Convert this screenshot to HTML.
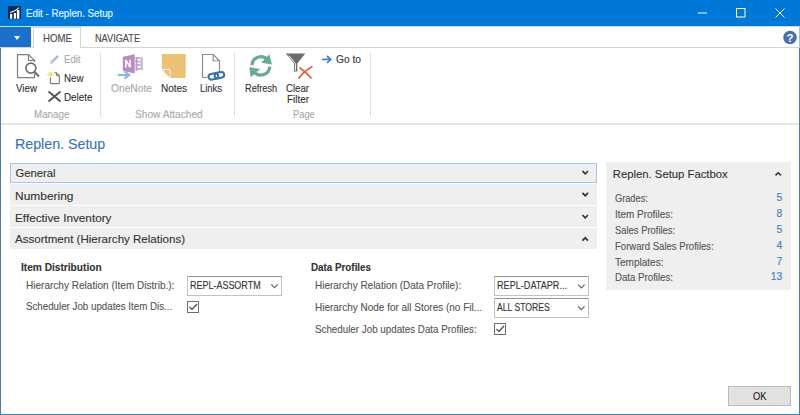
<!DOCTYPE html>
<html><head><meta charset="utf-8">
<style>
*{margin:0;padding:0;box-sizing:border-box}
html,body{width:800px;height:415px;overflow:hidden;background:#fff;font-family:"Liberation Sans",sans-serif;color:#333}
.a{position:absolute;white-space:nowrap;line-height:20px;transform-origin:0 0;-webkit-text-stroke:0.12px currentColor}
.b{position:absolute}
</style></head><body>
<!-- title bar -->
<div class="b" style="left:0;top:0;width:800px;height:26px;background:#0078d7"></div>
<div class="b" style="left:0;top:26px;width:800px;height:1px;background:#b9def3"></div>
<!-- window borders -->
<div class="b" style="left:0;top:27px;width:1px;height:388px;background:#507e9c"></div>
<div class="b" style="left:799px;top:27px;width:1px;height:388px;background:#4280ba"></div>
<div class="b" style="left:799px;top:27px;width:1px;height:20px;background:#9cc0e0"></div>
<div class="b" style="left:0;top:414px;width:800px;height:1px;background:#4280ba"></div>
<!-- tab row -->
<div class="b" style="left:0;top:27px;width:31px;height:20px;background:#1b70cb"></div>
<div class="b" style="left:0;top:47px;width:800px;height:1px;background:#d4d4d4"></div>
<div class="b" style="left:33px;top:27px;width:48px;height:21px;background:#fff;border:1px solid #d4d4d4;border-bottom:none"></div>
<!-- ribbon bottom -->
<div class="b" style="left:1px;top:123px;width:798px;height:2px;background:#e6e6e6"></div>
<!-- separators -->
<div class="b" style="left:100px;top:53px;width:1px;height:64px;background:#e0e0e0"></div>
<div class="b" style="left:234px;top:53px;width:1px;height:64px;background:#e0e0e0"></div>
<div class="b" style="left:370px;top:53px;width:1px;height:64px;background:#e0e0e0"></div>
<!-- fasttab headers -->
<div class="b" style="left:10px;top:163px;width:587px;height:20px;background:#efefef;border:1px solid #a9c5e6"></div>
<div class="b" style="left:10px;top:184px;width:587px;height:21px;background:#efefef"></div>
<div class="b" style="left:10px;top:206px;width:587px;height:21px;background:#efefef"></div>
<div class="b" style="left:10px;top:228px;width:587px;height:21px;background:#efefef"></div>
<!-- factbox -->
<div class="b" style="left:606px;top:162px;width:185px;height:128px;background:#efefef"></div>
<!-- dropdowns -->
<div class="b" style="left:187px;top:276px;width:95px;height:20px;border:1px solid #c2c2c2;border-top-color:#8f9595;background:#fff"></div>
<div class="b" style="left:494px;top:276px;width:95px;height:20px;border:1px solid #c2c2c2;border-top-color:#8f9595;background:#fff"></div>
<div class="b" style="left:494px;top:298px;width:95px;height:20px;border:1px solid #c2c2c2;border-top-color:#8f9595;background:#fff"></div>
<!-- checkboxes -->
<div class="b" style="left:187px;top:301px;width:12px;height:12px;border:1px solid #6d6d6d;background:#fff"></div>
<div class="b" style="left:494px;top:323px;width:12px;height:12px;border:1px solid #6d6d6d;background:#fff"></div>
<!-- OK button -->
<div class="b" style="left:728px;top:386px;width:63px;height:20px;background:#e1e1e1;border:1px solid #bababa"></div>

<svg class="b" style="left:0;top:0" width="800" height="415" viewBox="0 0 800 415">
  <!-- app icon -->
  <rect x="8" y="6" width="13" height="13" fill="#0b2a5b"/>
  <rect x="10" y="14" width="2.2" height="4.7" fill="#fff"/>
  <rect x="13.8" y="13" width="2.2" height="5.7" fill="#fff"/>
  <rect x="16.9" y="10" width="2.5" height="8.7" fill="#fff"/>
  <path d="M10.2 12.6 Q15 11.5 19.2 7.6" stroke="#e8eef8" stroke-width="1.1" fill="none"/>
  <!-- window controls -->
  <rect x="698" y="12.5" width="9" height="1" fill="#fff"/>
  <rect x="736.5" y="8.5" width="8.5" height="8.5" stroke="#fff" stroke-width="1" fill="none"/>
  <path d="M775.5 8.5 L784.5 17.5 M784.5 8.5 L775.5 17.5" stroke="#fff" stroke-width="1"/>
  <!-- dropdown triangle -->
  <path d="M14 36 H20 L17 40 Z" fill="#fff"/>
  <!-- help -->
  <circle cx="790" cy="37.5" r="6.8" fill="#4a70a6"/>
  <text x="790" y="42" font-family="Liberation Sans" font-weight="700" font-size="11.5" fill="#fff" text-anchor="middle">?</text>
  <!-- View icon -->
  <path d="M34.5 62 V60.5 L28.5 54.5 H17.5 V77.5 H34.5 V73.5" stroke="#808080" stroke-width="1.25" fill="none"/>
  <path d="M28.5 54.5 V60.5 H34.5" stroke="#777" stroke-width="1.2" fill="none"/>
  <circle cx="30.9" cy="68.1" r="5" stroke="#707070" stroke-width="1.7" fill="#fff"/>
  <path d="M34.6 72 L39 76.5" stroke="#707070" stroke-width="2.2"/>
  <!-- Edit pencil -->
  <path d="M52.3 61.7 L58.2 55.8" stroke="#aabfd2" stroke-width="2.6"/><path d="M50 64 L50.9 60.6 L53.4 63.1 Z" fill="#aabfd2"/>
  <!-- New icon -->
  <path d="M54.3 72.8 H56.4 L59.4 75.8 V82.6 Q59.4 83.6 58.4 83.6 H51.3 Q50.3 83.6 50.3 82.6 V77.5" stroke="#7a7a7a" stroke-width="1.1" fill="none"/>
  <path d="M56.4 72.8 V75.8 H59.4" stroke="#7a7a7a" stroke-width="1" fill="none"/>
  <path d="M50.5 71.2 V77.8 M47.2 74.5 H53.8 M48.2 72.2 L52.8 76.8 M52.8 72.2 L48.2 76.8" stroke="#ecd27a" stroke-width="0.9"/>
  <circle cx="50.5" cy="74.5" r="1.3" fill="#f2dc8a"/>
  <!-- Delete X -->
  <path d="M48.5 91.5 L60.5 101.5 M60.5 91.5 L48.5 101.5" stroke="#555" stroke-width="1.9"/>
  <!-- OneNote -->
  <path d="M122.8 56.7 L134.7 54.2 V73.6 L122.8 70.8 Z" fill="#b68cc3"/>
  <path d="M125 67.6 V59.8 H126.6 L129.4 64.6 V59.8 H130.9 V67.6 H129.4 L126.6 62.8 V67.6 Z" fill="#fff"/>
  <rect x="135.6" y="57.2" width="1.8" height="13.6" fill="#bb98c8"/>
  <path d="M135.6 57.9 H140.6 M135.6 61.5 H140.6 M135.6 65.1 H140.6 M135.6 68.7 H140.6" stroke="#bb98c8" stroke-width="1.5"/>
  <rect x="140.6" y="57.3" width="2.2" height="12.8" fill="#c9b3d2"/>
  <path d="M117.7 75 H128" stroke="#8dbad9" stroke-width="2.2"/>
  <path d="M124.6 71.4 L129.2 75 L124.6 78.6" stroke="#8dbad9" stroke-width="2.2" fill="none"/>
  <!-- Notes -->
  <path d="M162 54 H185.7 V78 H170.5 L162 69.5 Z" fill="#eec274"/>
  <path d="M162.5 69.5 H170 V77.5" stroke="#fff" stroke-width="1" fill="none"/>
  <path d="M163 70.5 H169.5 V77.5 Z" fill="#eec274"/>
  <!-- Links -->
  <path d="M219.5 72 V60.8 L213.2 54.5 H202.5 V77.5 H207.5" stroke="#8a8a8a" stroke-width="1.15" fill="none"/>
  <path d="M213.2 54.5 V60.8 H219.5" stroke="#8a8a8a" stroke-width="1.1" fill="none"/>
  <rect x="208.6" y="73.6" width="9.6" height="5.6" rx="2.8" stroke="#3a76ab" stroke-width="2.1" fill="none" transform="rotate(-12 213.4 76.4)"/>
  <rect x="214.6" y="72.4" width="9.6" height="5.6" rx="2.8" stroke="#3a76ab" stroke-width="2.1" fill="none" transform="rotate(-12 219.4 75.2)"/>
  <!-- Refresh -->
  <path d="M251.9 65.2 A8.9 8.9 0 0 1 267.6 59.9" stroke="#6aab98" stroke-width="3.2" fill="none"/>
  <path d="M269.3 54.3 L272 64.4 L261.2 62.8 Z" fill="#6aab98"/>
  <path d="M269.7 66.6 A8.9 8.9 0 0 1 254 71.9" stroke="#6aab98" stroke-width="3.2" fill="none"/>
  <path d="M250.6 77.2 L249.4 67.2 L260.3 69 Z" fill="#6aab98"/>
  <!-- Clear filter -->
  <path d="M285.9 53.6 H305.3 L297.3 63.5 V71.6 H294 V63.5 Z" fill="#6b6b6b"/>
  <path d="M288.8 55.6 L295.4 63.6 V70.6" stroke="#fff" stroke-width="1" fill="none"/>
  <path d="M298.5 78.5 Q304 71 312.5 66.5 M299.5 67.5 Q306 72 311.5 78.5" stroke="#d9674a" stroke-width="1.9" fill="none"/>
  <!-- Go to arrow -->
  <path d="M322 59.4 H330" stroke="#3f7fbf" stroke-width="1.7"/>
  <path d="M327 56 L330.8 59.4 L327 62.8" stroke="#3f7fbf" stroke-width="1.7" fill="none"/>
  <!-- fasttab chevrons -->
  <path d="M582.4 171 L585.2 173.8 L588 171" stroke="#333" stroke-width="1.7" fill="none"/>
  <path d="M582.4 192.9 L585.2 195.7 L588 192.9" stroke="#333" stroke-width="1.7" fill="none"/>
  <path d="M582.4 215 L585.2 217.8 L588 215" stroke="#333" stroke-width="1.7" fill="none"/>
  <path d="M582.4 240.6 L585.2 237.8 L588 240.6" stroke="#333" stroke-width="1.7" fill="none"/>
  <!-- factbox caret -->
  <path d="M775.5 175.4 L778.2 172.7 L780.9 175.4" stroke="#333" stroke-width="1.5" fill="none"/>
  <!-- dropdown chevrons -->
  <path d="M271.2 284.3 L274.5 287.6 L277.8 284.3" stroke="#606060" stroke-width="1.1" fill="none"/>
  <path d="M578 284.6 L581.3 287.9 L584.6 284.6" stroke="#606060" stroke-width="1.1" fill="none"/>
  <path d="M578 306.4 L581.3 309.7 L584.6 306.4" stroke="#606060" stroke-width="1.1" fill="none"/>
  <!-- checkmarks -->
  <path d="M189.5 307 L192 309.5 L197 304" stroke="#444" stroke-width="1.2" fill="none"/>
  <path d="M496.5 329 L499 331.5 L504 326" stroke="#444" stroke-width="1.2" fill="none"/>
</svg>
<div class="a" style="left:26.30px;top:3.67px;font-size:10.2px;color:#def3ff;transform:scaleX(0.9542);-webkit-text-stroke:0.22px currentColor;">Edit - Replen. Setup</div>
<div class="a" style="left:42.70px;top:29.23px;font-size:10.3px;color:#4a4a4a;transform:scaleX(0.9388);">HOME</div>
<div class="a" style="left:95.00px;top:29.23px;font-size:10.3px;color:#4a4a4a;transform:scaleX(0.8904);">NAVIGATE</div>
<div class="a" style="left:16.00px;top:78.16px;font-size:10.5px;color:#333;transform:scaleX(0.9305);">View</div>
<div class="a" style="left:63.60px;top:49.26px;font-size:10.5px;color:#a9a9a9;transform:scaleX(0.9120);">Edit</div>
<div class="a" style="left:63.60px;top:67.96px;font-size:10.5px;color:#333;transform:scaleX(0.9283);">New</div>
<div class="a" style="left:63.60px;top:86.86px;font-size:10.5px;color:#333;transform:scaleX(0.9390);">Delete</div>
<div class="a" style="left:34.30px;top:104.16px;font-size:10.5px;color:#a9a9a9;transform:scaleX(0.9329);">Manage</div>
<div class="a" style="left:111.00px;top:78.16px;font-size:10.5px;color:#a9a9a9;transform:scaleX(0.9756);">OneNote</div>
<div class="a" style="left:160.70px;top:78.16px;font-size:10.5px;color:#333;transform:scaleX(0.9479);">Notes</div>
<div class="a" style="left:200.00px;top:78.16px;font-size:10.5px;color:#333;transform:scaleX(0.8975);">Links</div>
<div class="a" style="left:134.70px;top:104.16px;font-size:10.5px;color:#a9a9a9;transform:scaleX(0.9670);">Show Attached</div>
<div class="a" style="left:245.00px;top:78.16px;font-size:10.5px;color:#333;transform:scaleX(0.8758);">Refresh</div>
<div class="a" style="left:285.90px;top:78.16px;font-size:10.5px;color:#333;transform:scaleX(0.9167);">Clear</div>
<div class="a" style="left:287.00px;top:89.16px;font-size:10.5px;color:#333;transform:scaleX(0.9429);">Filter</div>
<div class="a" style="left:335.80px;top:49.36px;font-size:10.5px;color:#333;transform:scaleX(0.9735);">Go to</div>
<div class="a" style="left:292.60px;top:104.16px;font-size:10.5px;color:#a9a9a9;transform:scaleX(0.8890);">Page</div>
<div class="a" style="left:14.90px;top:133.60px;font-size:15.3px;color:#3973b0;transform:scaleX(0.9304);">Replen. Setup</div>
<div class="a" style="left:15.40px;top:163.28px;font-size:11.3px;color:#333;">General</div>
<div class="a" style="left:15.20px;top:185.78px;font-size:11.3px;color:#333;transform:scaleX(1.0587);">Numbering</div>
<div class="a" style="left:15.20px;top:207.88px;font-size:11.3px;color:#333;transform:scaleX(1.0407);">Effective Inventory</div>
<div class="a" style="left:15.20px;top:229.28px;font-size:11.3px;color:#333;transform:scaleX(1.0219);">Assortment (Hierarchy Relations)</div>
<div class="a" style="left:21.30px;top:257.26px;font-size:10.8px;color:#333;font-weight:700;transform:scaleX(0.9397);">Item Distribution</div>
<div class="a" style="left:26.00px;top:275.16px;font-size:10.5px;color:#555;transform:scaleX(0.9562);">Hierarchy Relation (Item Distrib.):</div>
<div class="a" style="left:26.00px;top:296.11px;font-size:10.5px;color:#555;transform:scaleX(0.9278);">Scheduler Job updates Item Dis...</div>
<div class="a" style="left:190.40px;top:275.16px;font-size:10.5px;color:#333;transform:scaleX(0.8541);">REPL-ASSORTM</div>
<div class="a" style="left:310.70px;top:257.26px;font-size:10.8px;color:#333;font-weight:700;transform:scaleX(0.9090);">Data Profiles</div>
<div class="a" style="left:315.40px;top:275.16px;font-size:10.5px;color:#555;transform:scaleX(0.9490);">Hierarchy Relation (Data Profile):</div>
<div class="a" style="left:315.40px;top:297.06px;font-size:10.5px;color:#555;transform:scaleX(0.9508);">Hierarchy Node for all Stores (no Fil...</div>
<div class="a" style="left:315.40px;top:318.86px;font-size:10.5px;color:#555;transform:scaleX(0.9322);">Scheduler Job updates Data Profiles:</div>
<div class="a" style="left:497.00px;top:275.16px;font-size:10.5px;color:#333;transform:scaleX(0.8673);">REPL-DATAPR...</div>
<div class="a" style="left:497.00px;top:297.06px;font-size:10.5px;color:#333;transform:scaleX(0.8206);">ALL STORES</div>
<div class="a" style="left:612.80px;top:163.58px;font-size:11.3px;color:#333;">Replen. Setup Factbox</div>
<div class="a" style="left:614.50px;top:187.56px;font-size:10.5px;color:#555;transform:scaleX(0.8782);">Grades:</div>
<div class="a" style="left:614.50px;top:203.76px;font-size:10.5px;color:#555;transform:scaleX(0.9467);">Item Profiles:</div>
<div class="a" style="left:614.50px;top:219.86px;font-size:10.5px;color:#555;transform:scaleX(0.8955);">Sales Profiles:</div>
<div class="a" style="left:614.50px;top:235.76px;font-size:10.5px;color:#555;transform:scaleX(0.9103);">Forward Sales Profiles:</div>
<div class="a" style="left:614.50px;top:251.56px;font-size:10.5px;color:#555;transform:scaleX(0.9552);">Templates:</div>
<div class="a" style="left:614.50px;top:267.36px;font-size:10.5px;color:#555;transform:scaleX(0.9203);">Data Profiles:</div>
<div class="a" style="left:752.50px;top:386.01px;font-size:10.8px;color:#222;transform:scaleX(0.8654);">OK</div>
<div class="a" style="right:17.70px;top:187.63px;font-size:10.3px;color:#3b7dbd;">5</div>
<div class="a" style="right:17.70px;top:203.83px;font-size:10.3px;color:#3b7dbd;">8</div>
<div class="a" style="right:17.70px;top:219.93px;font-size:10.3px;color:#3b7dbd;">5</div>
<div class="a" style="right:17.70px;top:235.83px;font-size:10.3px;color:#3b7dbd;">4</div>
<div class="a" style="right:17.70px;top:251.63px;font-size:10.3px;color:#3b7dbd;">7</div>
<div class="a" style="right:17.70px;top:267.43px;font-size:10.3px;color:#3b7dbd;">13</div>
</body></html>
